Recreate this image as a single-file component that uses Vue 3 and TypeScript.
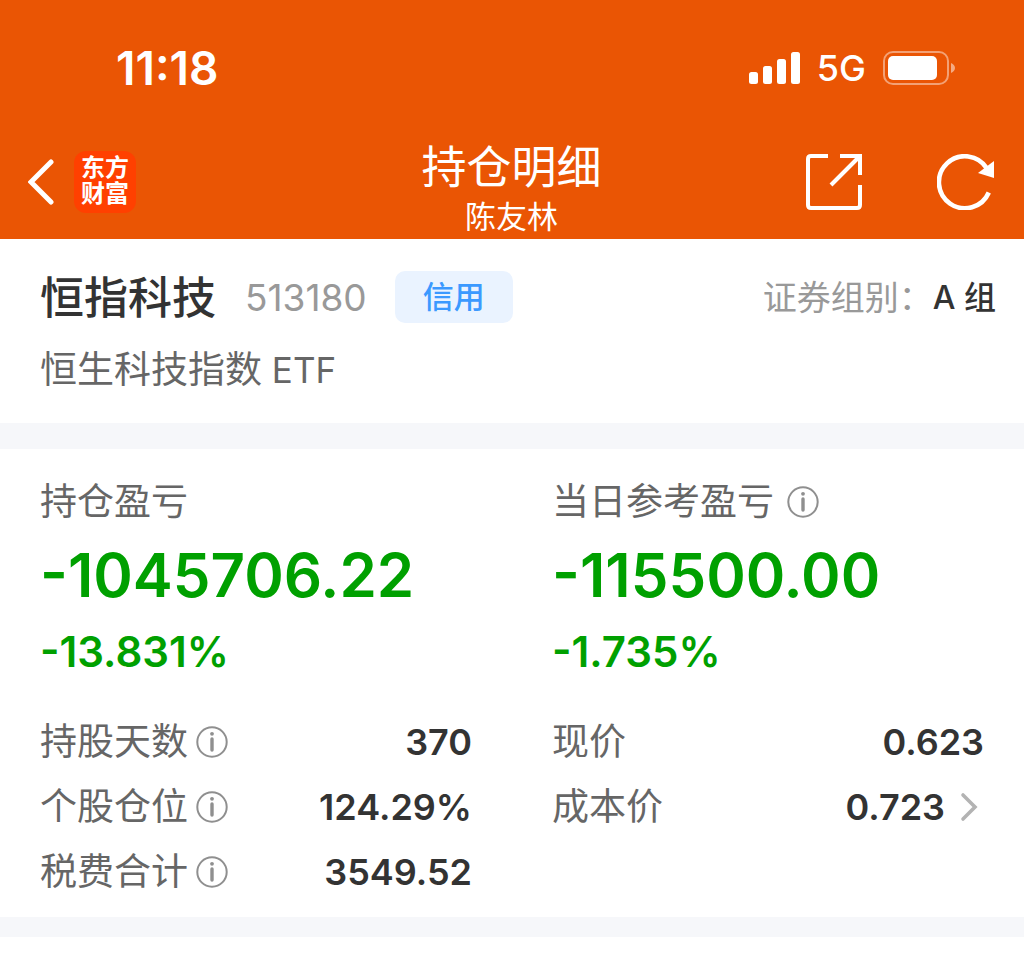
<script setup lang="ts">
interface Detail {
  label: string
  value: string
  info?: boolean
  more?: boolean
}

interface Column {
  label: string
  info: boolean
  amount: string
  percent: string
  details: Detail[]
}

const columns: Column[] = [
  {
    label: '持仓盈亏',
    info: false,
    amount: '-1045706.22',
    percent: '-13.831%',
    details: [
      { label: '持股天数', value: '370', info: true },
      { label: '个股仓位', value: '124.29%', info: true },
      { label: '税费合计', value: '3549.52', info: true },
    ],
  },
  {
    label: '当日参考盈亏',
    info: true,
    amount: '-115500.00',
    percent: '-1.735%',
    details: [
      { label: '现价', value: '0.623' },
      { label: '成本价', value: '0.723', more: true },
    ],
  },
]
</script>

<template>
  <div class="page">
    <header class="top">
      <div class="status">
        <span class="clock">11:18</span>
        <div class="signals">
          <svg width="52" height="34" viewBox="0 0 52 34" fill="#fff" aria-hidden="true">
            <rect x="1" y="21" width="9" height="12" rx="2.5" />
            <rect x="15" y="15" width="9" height="18" rx="2.5" />
            <rect x="29" y="8" width="9" height="25" rx="2.5" />
            <rect x="43" y="1" width="9" height="32" rx="2.5" />
          </svg>
          <span class="network">5G</span>
          <svg width="72" height="34" viewBox="0 0 72 34" aria-hidden="true">
            <rect x="1" y="1" width="64" height="32" rx="9" fill="none" stroke="#fff" stroke-opacity=".45" stroke-width="2" />
            <rect x="5" y="5" width="49" height="24" rx="5" fill="#fff" />
            <path d="M68 12 Q72 14 72 17 Q72 20 68 22Z" fill="#fff" fill-opacity=".5" />
          </svg>
        </div>
      </div>
      <nav class="nav">
        <div class="side">
          <button class="icon" type="button" aria-label="返回">
            <svg width="26" height="46" viewBox="0 0 26 46" fill="none" stroke="#fff" stroke-width="5" stroke-linecap="round">
              <path d="M23 3 L3 23 L23 43" />
            </svg>
          </button>
          <span class="logo">东方财富</span>
        </div>
        <div class="heading">
          <h1>持仓明细</h1>
          <p>陈友林</p>
        </div>
        <div class="side end">
          <button class="icon" type="button" aria-label="分享">
            <svg width="56" height="56" viewBox="0 0 56 56" fill="none" stroke="#fff" stroke-width="4">
              <path d="M22 2 H5 Q2 2 2 5 V51 Q2 54 5 54 H51 Q54 54 54 51 V31" />
              <path d="M34 2 H54 V21" />
              <path d="M54 2 L25 31" />
            </svg>
          </button>
          <button class="icon" type="button" aria-label="刷新">
            <svg width="58" height="56" viewBox="0 0 58 56" fill="none" stroke="#fff" stroke-width="4.6">
              <path d="M51.8 38.5 A26 26 0 1 1 50 14.5" />
              <path d="M57 7 V24 L41 19Z" fill="#fff" stroke="none" />
            </svg>
          </button>
        </div>
      </nav>
    </header>

    <main>
      <section class="stock">
        <div class="line">
          <h2>恒指科技</h2>
          <span class="code">513180</span>
          <span class="tag">信用</span>
          <span class="group">证券组别：</span>
          <span class="group-name">A 组</span>
        </div>
        <p class="full">恒生科技指数<span class="latin"> ETF</span></p>
      </section>

      <section class="figures">
        <div v-for="col in columns" :key="col.label" class="column">
          <div class="label wide">
            {{ col.label }}
            <button v-if="col.info" class="icon" type="button" :aria-label="col.label + '说明'">
              <svg width="32" height="32" viewBox="0 0 32 32" fill="none" stroke="#8f8f8f">
                <circle cx="16" cy="16" r="14.7" stroke-width="2" />
                <path d="M16 13 V24" stroke-width="3.4" stroke-linecap="round" />
                <circle cx="16" cy="7.8" r="1.9" fill="#8f8f8f" stroke="none" />
              </svg>
            </button>
          </div>
          <div class="amount">{{ col.amount }}</div>
          <div class="percent">{{ col.percent }}</div>
          <dl>
            <div v-for="item in col.details" :key="item.label" class="row">
              <dt class="label">
                {{ item.label }}
                <button v-if="item.info" class="icon" type="button" :aria-label="item.label + '说明'">
                  <svg width="32" height="32" viewBox="0 0 32 32" fill="none" stroke="#8f8f8f">
                    <circle cx="16" cy="16" r="14.7" stroke-width="2" />
                    <path d="M16 13 V24" stroke-width="3.4" stroke-linecap="round" />
                    <circle cx="16" cy="7.8" r="1.9" fill="#8f8f8f" stroke="none" />
                  </svg>
                </button>
              </dt>
              <dd>
                {{ item.value }}
                <button v-if="item.more" class="icon" type="button" :aria-label="item.label + '详情'">
                  <svg width="24" height="30" viewBox="0 0 24 30" fill="none" stroke="#b3b3b3" stroke-width="3.6" stroke-linecap="round">
                    <path d="M3 3 L15 15 L3 27" />
                  </svg>
                </button>
              </dd>
            </div>
          </dl>
        </div>
      </section>
    </main>
  </div>
</template>

<style>
body {
  margin: 0;
  background: #fff;
}
</style>

<style scoped>
.page {
  font-family: Inter, 'Noto Sans CJK SC', sans-serif;
  color: #333;
}

h1,
h2,
p,
dl,
dd {
  margin: 0;
  font-weight: 400;
}

.icon {
  display: block;
  padding: 0;
  border: 0;
  background: none;
}

.icon svg {
  display: block;
}

.top {
  background: #ea5504;
  color: #fff;
}

.status {
  display: flex;
  align-items: center;
  justify-content: space-between;
  height: 136px;
  padding: 0 69px 0 116px;
}

.clock {
  font-size: 46px;
  font-weight: 600;
}

.signals {
  display: flex;
  align-items: center;
  gap: 17px;
}

.network {
  font-size: 36px;
  font-weight: 500;
}

.nav {
  display: grid;
  grid-template-columns: 1fr auto 1fr;
  height: 103px;
  padding: 0 29px 0 28px;
}

.side {
  display: flex;
  align-items: center;
  gap: 20px;
  height: 91px;
}

.end {
  justify-content: flex-end;
  gap: 75px;
}

.logo {
  box-sizing: border-box;
  width: 62px;
  padding: 4px 7px 6px;
  border-radius: 12px;
  background: #ff4000;
  font-size: 24px;
  font-weight: 700;
  line-height: 26px;
}

.heading {
  text-align: center;
}

.heading h1 {
  font-size: 45px;
  line-height: 64px;
}

.heading p {
  font-size: 31px;
  line-height: 34px;
}

.stock {
  padding: 24px 28px 0 40px;
  height: 160px;
}

.line {
  display: flex;
  align-items: center;
  height: 68px;
}

h2 {
  padding-bottom: 4px;
  font-size: 44px;
  font-weight: 500;
}

.code {
  margin-left: 29px;
  font-size: 37px;
  color: #999;
}

.tag {
  margin-left: 28px;
  padding: 0 28px;
  border-radius: 10px;
  background: #eaf3ff;
  color: #3b99ff;
  font-size: 31px;
  font-weight: 500;
  line-height: 52px;
}

.group {
  margin-left: auto;
  padding-bottom: 4px;
  font-size: 34px;
  color: #999;
}

.group-name {
  padding-bottom: 4px;
  font-size: 32px;
  font-weight: 500;
}

.full {
  font-size: 37px;
  line-height: 78px;
  color: #666;
}

.latin {
  font-size: 35px;
}

.figures {
  display: grid;
  grid-template-columns: 1fr 1fr;
  padding: 25px 0 13px;
  border: solid #f6f7fa;
  border-width: 26px 0 20px;
}

.column {
  padding: 0 40px;
}

.label {
  display: flex;
  align-items: center;
  gap: 8px;
  font-size: 37px;
  line-height: 56px;
  color: #666;
}

.wide {
  gap: 13px;
}

.amount {
  font-size: 60px;
  font-weight: 600;
  line-height: 91px;
  color: #00a000;
}

.percent {
  font-size: 42px;
  font-weight: 600;
  line-height: 62px;
  color: #00a000;
}

dl {
  margin-top: 26px;
}

.row {
  display: flex;
  align-items: center;
  justify-content: space-between;
  height: 65px;
}

dd {
  display: flex;
  align-items: center;
  gap: 15px;
  font-size: 36px;
  font-weight: 600;
}
</style>
